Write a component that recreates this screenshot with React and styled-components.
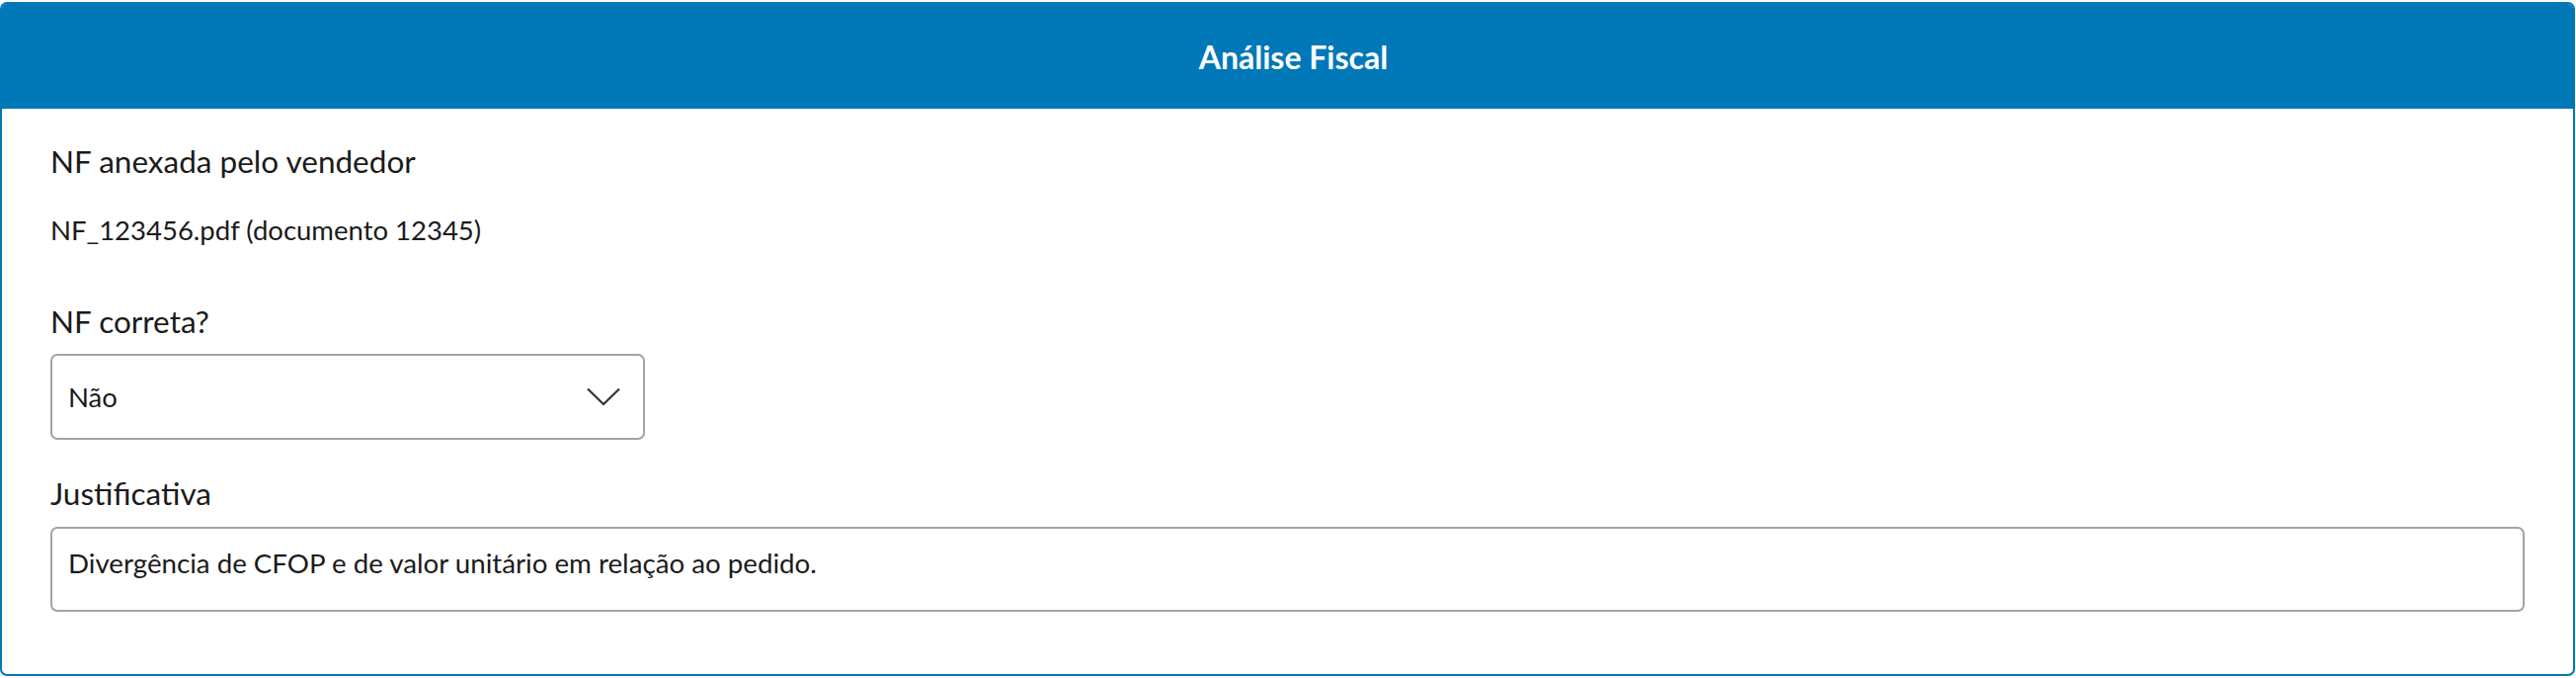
import React from 'react';
import styled, { createGlobalStyle } from 'styled-components';

const GlobalStyle = createGlobalStyle`
  body {
    margin: 0;
    background: #fff;
    font-family: Lato, "Noto Sans", sans-serif;
    color: #1b1b1b;
  }
`

const Page = styled.div`
  padding: 2px 1px 1px 0;
`

const Card = styled.section`
  border: 2px solid #0078b8;
  border-radius: 7px;
  overflow: hidden;
  background: #fff;
`

const Header = styled.header`
  height: 106px;
  display: flex;
  align-items: center;
  justify-content: center;
  background: #0078b8;
`

const Title = styled.h1`
  margin: 0 0 0 12px;
  font-size: 32px;
  font-weight: 700;
  color: #fff;
`

const Body = styled.div`
  display: flex;
  flex-direction: column;
  padding: 33px 49px 63px;
`

const Field = styled.div`
  display: flex;
  flex-direction: column;
  gap: ${({ $gap }) => $gap}px;
  margin-top: ${({ $top }) => $top || 0}px;
`

const Label = styled.div`
  font-size: 31.5px;
  line-height: 40px;
  color: #1b1b1b;
`

const Value = styled.div`
  font-size: 27.5px;
  line-height: 36px;
  color: #1b1b1b;
`

const Select = styled.div`
  box-sizing: border-box;
  width: 602px;
  height: 87px;
  display: flex;
  align-items: center;
  justify-content: space-between;
  padding: 0 23px 0 16px;
  border: 2px solid #a3a3a3;
  border-radius: 7px;
  font-size: 27.5px;
  color: #1b1b1b;
`

const TextArea = styled.textarea`
  box-sizing: border-box;
  width: 100%;
  height: 86px;
  margin: 0;
  padding: 17px 16px 15px;
  border: 2px solid #a3a3a3;
  border-radius: 7px;
  font-family: Lato, "Noto Sans", sans-serif;
  font-size: 27.7px;
  line-height: 36px;
  color: #1b1b1b;
  resize: none;
  outline: none;
`

const Chevron = () => (
  <svg width="34" height="19" viewBox="0 0 34 19" fill="none">
    <polyline points="1,1.5 17,17 33,1.5" stroke="#333" strokeWidth="2.2" />
  </svg>
)

const App = () => {
  return (
    <Page>
      <GlobalStyle />
      <Card>
        <Header>
          <Title>Análise Fiscal</Title>
        </Header>
        <Body>
          <Field $gap={32}>
            <Label>NF anexada pelo vendedor</Label>
            <Value>NF_123456.pdf (documento 12345)</Value>
          </Field>
          <Field $gap={13} $top={54}>
            <Label>NF correta?</Label>
            <Select>
              <span>Não</span>
              <Chevron />
            </Select>
          </Field>
          <Field $gap={14} $top={34}>
            <Label>Justificativa</Label>
            <TextArea readOnly value="Divergência de CFOP e de valor unitário em relação ao pedido." />
          </Field>
        </Body>
      </Card>
    </Page>
  )
}

export default App
